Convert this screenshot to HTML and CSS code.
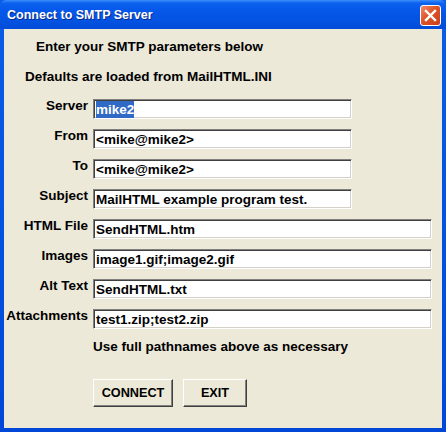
FILE: index.html
```html
<!DOCTYPE html>
<html>
<head>
<meta charset="utf-8">
<link rel="stylesheet" href="styles.css">
</head>
<body>
<div class="window">
  <div class="titlebar">
    <span class="title">Connect to SMTP Server</span>
    <span class="close"><svg width="13" height="13" viewBox="0 0 13 13"><path d="M2 2 L11 11 M11 2 L2 11" stroke="#fff" stroke-width="2.4" stroke-linecap="square"/></svg></span>
  </div>
  <div class="client">
    <p class="line1">Enter your SMTP parameters below</p>
    <p class="line2">Defaults are loaded from MailHTML.INI</p>
    <div class="form">
      <span class="lbl">Server</span><div class="field short"><span class="sel">mike2</span></div>
      <span class="lbl">From</span><div class="field short">&lt;mike@mike2&gt;</div>
      <span class="lbl">To</span><div class="field short">&lt;mike@mike2&gt;</div>
      <span class="lbl">Subject</span><div class="field short">MailHTML example program test.</div>
      <span class="lbl">HTML File</span><div class="field long">SendHTML.htm</div>
      <span class="lbl">Images</span><div class="field long">image1.gif;image2.gif</div>
      <span class="lbl">Alt Text</span><div class="field long">SendHTML.txt</div>
      <span class="lbl">Attachments</span><div class="field long">test1.zip;test2.zip</div>
    </div>
    <p class="note">Use full pathnames above as necessary</p>
    <div class="buttons">
      <span class="btn connect">CONNECT</span>
      <span class="btn exit">EXIT</span>
    </div>
  </div>
</div>
</body>
</html>
```
FILE: styles.css
```css
html, body {
  margin: 0;
  padding: 0;
  background: #ece9d8;
}
.window {
  width: 446px;
  height: 432px;
  box-sizing: border-box;
  display: flex;
  flex-direction: column;
  background: linear-gradient(#0a5ee8, #0047d8);
  padding: 0 4px 4px 4px;
  font-family: "Liberation Sans", Arial, sans-serif;
  font-weight: bold;
  font-size: 13.5px;
  color: #000;
}
.titlebar {
  height: 29px;
  display: flex;
  align-items: center;
  justify-content: space-between;
  margin: 0 -4px;
  padding: 0 5px 0 7px;
  background: linear-gradient(#3d8ff8 0, #0d62ee 3px, #0558ea 10px, #0453e2 20px, #044bd8 29px);
  border-radius: 6px 6px 0 0;
}
.title {
  color: #fff;
  font-size: 12.5px;
  font-weight: bold;
  text-shadow: 1px 1px 0 #0a2a8a;
  margin-top: 1px;
}
.close {
  width: 19px;
  height: 19px;
  border: 1px solid #fff;
  border-radius: 3px;
  background: linear-gradient(135deg, #f08a6c, #e05226 45%, #c8401c);
  display: flex;
  align-items: center;
  justify-content: center;
  margin-top: 1px;
}
.client {
  flex: 1;
  background: #ece9d8;
  display: flex;
  flex-direction: column;
  padding-top: 10px;
}
.client p {
  margin: 0;
  line-height: 16px;
}
.line1 {
  padding-left: 32px;
}
.line2 {
  padding-left: 21px;
  margin-top: 14px !important;
}
.form {
  margin-top: 14px;
  display: grid;
  grid-template-columns: 84px auto;
  column-gap: 5px;
  row-gap: 10px;
  justify-items: start;
}
.lbl {
  justify-self: end;
  line-height: 14px;
  align-self: start;
}
.field {
  height: 20px;
  box-sizing: border-box;
  background: #fff;
  border-top: 1px solid #808080;
  border-left: 1px solid #808080;
  border-bottom: 1px solid #fff;
  border-right: 1px solid #fff;
  box-shadow: inset 1px 1px 0 #404040, inset -1px -1px 0 #d4d0c8;
  padding: 0 0 0 2px;
  line-height: 19px;
  white-space: nowrap;
}
.short { width: 259px; }
.long { width: 339px; }
.sel {
  background: #316ac5;
  color: #fff;
  padding: 1px 0;
}
.note {
  margin-top: 10px !important;
  padding-left: 89px;
}
.buttons {
  margin-top: 24px;
  padding-left: 89px;
  display: flex;
  gap: 10px;
}
.btn {
  height: 28px;
  box-sizing: border-box;
  display: flex;
  align-items: center;
  justify-content: center;
  border-top: 1px solid #fff;
  border-left: 1px solid #fff;
  border-bottom: 1px solid #404040;
  border-right: 1px solid #404040;
  box-shadow: inset -1px -1px 0 #808080;
  font-size: 12.7px;
}
.connect { width: 80px; }
.exit { width: 64px; }
```
